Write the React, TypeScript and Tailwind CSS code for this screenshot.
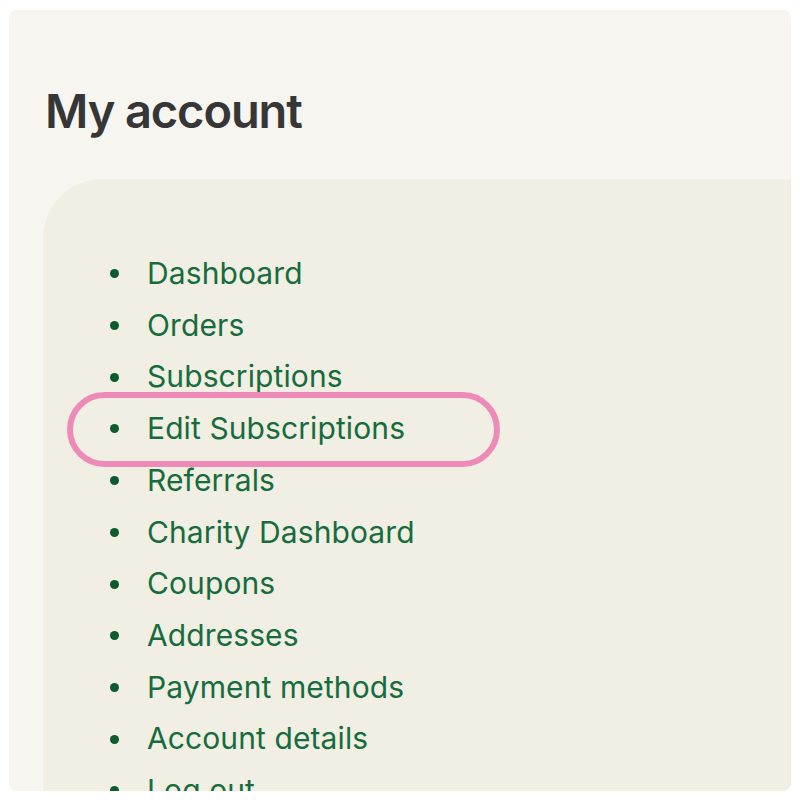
import React from 'react';

const links = [
  'Dashboard',
  'Orders',
  'Subscriptions',
  'Edit Subscriptions',
  'Referrals',
  'Charity Dashboard',
  'Coupons',
  'Addresses',
  'Payment methods',
  'Account details',
  'Log out',
];

export default function App() {
  return (
    <div className="min-h-screen bg-white pl-[9px] pt-[10px]" style={{ fontFamily: 'Inter, "Liberation Sans", sans-serif' }}>
      <div className="flex h-[781px] w-[782px] flex-col overflow-hidden rounded-lg bg-[#f7f5f0]">
        <h1 className="ml-[36px] mt-[77px] text-[47px] font-semibold leading-none tracking-[-1.1px] text-[#363636]">
          My account
        </h1>
        <div className="ml-[34px] mt-[45px] flex-1 rounded-tl-[60px] bg-[#f1eee3] pl-[67px] pt-[69px]">
          <ul>
            {links.map((label) => (
              <li key={label} className="relative flex items-center gap-[28px] text-[30px] leading-[51.7px] tracking-[0.1px] text-[#176c3d]">
                <span className="h-[9px] w-[9px] shrink-0 rounded-full bg-[#0c5a2f]" />
                <a href="#">{label}</a>
                {label === 'Edit Subscriptions' && (
                  <span className="pointer-events-none absolute -left-[43px] -top-[11px] h-[75px] w-[433px] rounded-full border-[6px] border-[#ee8ab8]" />
                )}
              </li>
            ))}
          </ul>
        </div>
      </div>
    </div>
  );
}
